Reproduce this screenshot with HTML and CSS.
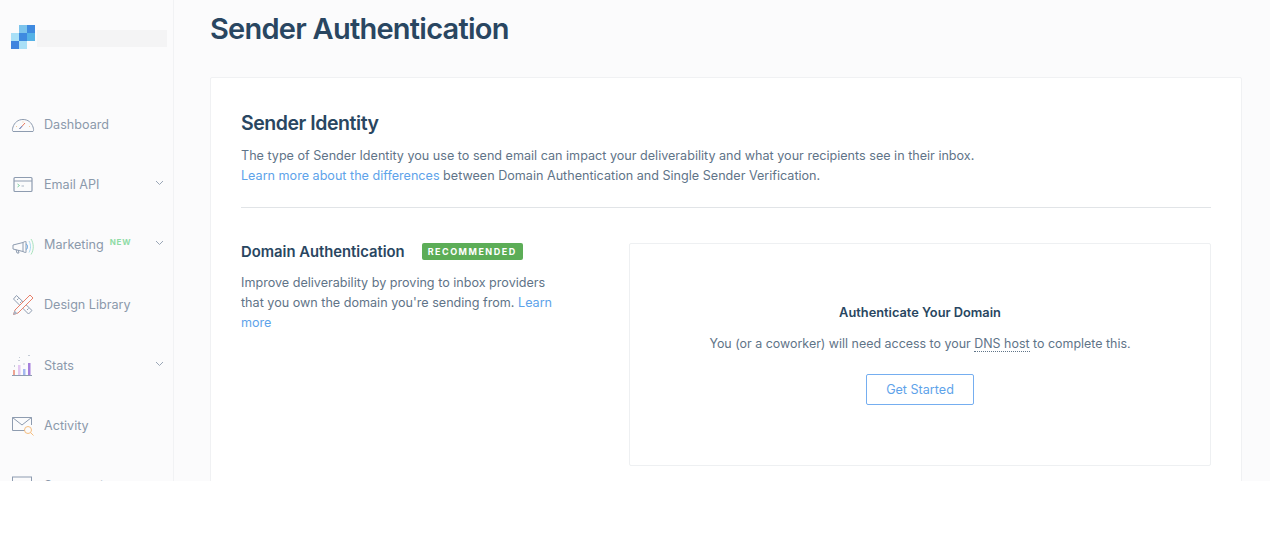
FILE: index.html
```html
<!DOCTYPE html>
<html lang="en">
<head>
  <meta charset="UTF-8">
  <title>Sender Authentication</title>
  <link rel="stylesheet" href="styles.css">
</head>
<body>
  <div class="app">
    <aside class="sidebar">
      <div class="brand">
        <svg class="brand-logo" width="24" height="24" viewBox="0 0 24 24">
          <rect x="8" y="0" width="8" height="8" fill="#7cc4ec"/>
          <rect x="16" y="0" width="8" height="8" fill="#3f8ae0"/>
          <rect x="0" y="8" width="8" height="8" fill="#a9e0f7"/>
          <rect x="8" y="8" width="8" height="8" fill="#3f8ae0"/>
          <rect x="16" y="8" width="8" height="8" fill="#55b2e6"/>
          <rect x="0" y="16" width="8" height="8" fill="#3f84de"/>
          <rect x="8" y="16" width="8" height="8" fill="#a9e0f7"/>
        </svg>
        <div class="brand-name"></div>
      </div>
      <nav class="nav">
        <a class="nav-item">
          <svg class="nav-icon" width="24" height="24" viewBox="0 0 24 24" fill="none">
            <path d="M2 19.500c-1-1-.5-3 0-4.500C3.500 10.500 7 7.500 12 7.500s8.500 3 10 7.500c.5 1.500 1 3.500 0 4.500z" stroke="#8e9cb0" stroke-width="1"/>
            <path d="M8.500 17l5.500-6" stroke="#e8795d" stroke-width="1"/>
            <path d="M8.500 17l2.500-2.800" stroke="#4a8fe0" stroke-width="1"/>
            <path d="M12 9.500v1M5 14.500h1M18 14.500h1" stroke="#f3c99b" stroke-width="1"/>
          </svg>
          <span>Dashboard</span>
        </a>
        <a class="nav-item">
          <svg class="nav-icon" width="24" height="24" viewBox="0 0 24 24" fill="none">
            <rect x="3" y="5.500" width="18" height="14" rx="1" stroke="#8e9cb0" stroke-width="1.200"/>
            <path d="M3 9h18" stroke="#8e9cb0" stroke-width="1"/>
            <path d="M6.500 12l2 1.500-2 1.500" stroke="#7fd0a0" stroke-width="1"/>
            <path d="M10.500 14h2.500" stroke="#a9b5c5" stroke-width="1"/>
          </svg>
          <span>Email API</span>
          <svg class="nav-caret" width="9" height="6" viewBox="0 0 9 6" fill="none"><path d="M1 1l3.500 3.500L8 1" stroke="#9aa6b6" stroke-width="1"/></svg>
        </a>
        <a class="nav-item">
          <svg class="nav-icon" width="24" height="24" viewBox="0 0 24 24" fill="none">
            <path d="M2 12l10-2.500v9L2 16z" stroke="#8e9cb0" stroke-width="1"/>
            <path d="M5 16.500l1 3.500h2l-.8-3" stroke="#8e9cb0" stroke-width="1"/>
            <path d="M12 9.500c1.500-1 2.500-1 3-1v11c-.5 0-1.500 0-3-1" stroke="#8e9cb0" stroke-width="1"/>
            <path d="M15 11c2 .5 2 5 0 5.500" stroke="#5ba3e6" stroke-width="1"/>
            <path d="M18 8c2 3.500 2 8 0 11.500" stroke="#a6d8ee" stroke-width="1"/>
            <path d="M20 6c3 4.500 3 11 0 15.500" stroke="#a9e3bd" stroke-width="1"/>
          </svg>
          <span>Marketing</span>
          <span class="nav-new">NEW</span>
          <svg class="nav-caret" width="9" height="6" viewBox="0 0 9 6" fill="none"><path d="M1 1l3.500 3.500L8 1" stroke="#9aa6b6" stroke-width="1"/></svg>
        </a>
        <a class="nav-item">
          <svg class="nav-icon" width="24" height="24" viewBox="0 0 24 24" fill="none">
            <path d="M5.500 2.500L2.500 6l15 15 3.500-3.500z" stroke="#8e9cb0" stroke-width="1"/>
            <path d="M6 7l1.500-1.500M9 10l1.500-1.500M13 14l1.500-1.500M16 17l1.500-1.500" stroke="#8e9cb0" stroke-width="1"/>
            <path d="M19 2l3 3L7 20l-4.500 1.500L4 17z" fill="#fbfbfc" stroke="#e8806a" stroke-width="1"/>
            <path d="M2 22l1.500-4.500 3 3z" fill="#a9b5c5"/>
          </svg>
          <span>Design Library</span>
        </a>
        <a class="nav-item">
          <svg class="nav-icon" width="24" height="24" viewBox="0 0 24 24" fill="none">
            <path d="M1 22.500h20" stroke="#8e9cb0" stroke-width="1"/>
            <rect x="2" y="17" width="2" height="5" fill="#eea493"/>
            <rect x="7" y="12" width="2.500" height="10" fill="#e3c8f2"/>
            <rect x="12" y="16" width="2.500" height="6" fill="#a5b8f0"/>
            <rect x="17" y="10" width="2.500" height="12" fill="#a57fdc"/>
            <path d="M3 13h1M7.500 7.500h1M12.500 11h1M8 4.500h.500M17.500 2.500h1" stroke="#8e9cb0" stroke-width="1.200"/>
          </svg>
          <span>Stats</span>
          <svg class="nav-caret" width="9" height="6" viewBox="0 0 9 6" fill="none"><path d="M1 1l3.500 3.500L8 1" stroke="#9aa6b6" stroke-width="1"/></svg>
        </a>
        <a class="nav-item">
          <svg class="nav-icon" width="24" height="24" viewBox="0 0 24 24" fill="none">
            <path d="M14 17.500H1.500V4.500h19V12" stroke="#8e9cb0" stroke-width="1"/>
            <path d="M1.500 4.500L11 12l9.500-7.500" stroke="#8e9cb0" stroke-width="1"/>
            <circle cx="17" cy="17" r="3.500" stroke="#f5bd7e" stroke-width="1"/>
            <path d="M19.500 19.500l3 3" stroke="#f5bd7e" stroke-width="1"/>
          </svg>
          <span>Activity</span>
        </a>
        <a class="nav-item">
          <svg class="nav-icon" width="24" height="24" viewBox="0 0 24 24" fill="none">
            <rect x="1.500" y="3" width="19" height="16" stroke="#8e9cb0" stroke-width="1"/>
          </svg>
          <span>Suppressions</span>
        </a>
      </nav>
    </aside>
    <main class="main">
      <h1 class="page-title">Sender Authentication</h1>
      <section class="card">
        <h2 class="card-title">Sender Identity</h2>
        <p class="card-text">The type of Sender Identity you use to send email can impact your deliverability and what your recipients see in their inbox.<br><a class="link">Learn more about the differences</a> between Domain Authentication and Single Sender Verification.</p>
        <hr class="divider">
        <div class="auth-row">
          <div class="auth-info">
            <div class="auth-head">
              <h3 class="auth-title">Domain Authentication</h3>
              <span class="badge">RECOMMENDED</span>
            </div>
            <p class="card-text">Improve deliverability by proving to inbox providers that you own the domain you're sending from. <a class="link">Learn more</a></p>
          </div>
          <div class="auth-box">
            <h4 class="box-title">Authenticate Your Domain</h4>
            <p class="box-text">You (or a coworker) will need access to your <span class="dotted">DNS host</span> to complete this.</p>
            <a class="btn">Get Started</a>
          </div>
        </div>
      </section>
    </main>
  </div>
</body>
</html>
```

FILE: styles.css
```css
body {
  margin: 0;
  background-color: #fff;
  font-family: Inter, "Noto Sans", sans-serif;
  color: #5f7488;
}
.app {
  display: flex;
  height: 481px;
  overflow: hidden;
  background-color: #fbfbfc;
}
.sidebar {
  flex: 0 0 173px;
  border-right: 1px solid #f1f2f4;
}
.brand {
  display: flex;
  align-items: center;
  gap: 2px;
  padding: 25px 0 0 11px;
}
.brand-name {
  width: 130px;
  height: 17px;
  margin-top: 2px;
  background-color: #f4f4f5;
}
.nav {
  padding-top: 45px;
}
.nav-item {
  display: flex;
  align-items: center;
  height: 60.25px;
  padding-left: 11px;
  padding-right: 9px;
  font-size: 12.6px;
  color: #8b99ab;
}
.nav-icon {
  margin-right: 9px;
}
.nav-caret {
  margin-left: auto;
  margin-top: -3px;
}
.nav-new {
  margin-left: 6px;
  margin-top: -5px;
  font-size: 8px;
  font-weight: 700;
  letter-spacing: 0.8px;
  color: #8fdca6;
}
.main {
  flex: 1;
  padding: 0 28px 0 36px;
}
.page-title {
  margin: 11px 0 31px;
  font-size: 29px;
  line-height: 35px;
  font-weight: 600;
  letter-spacing: -0.75px;
  color: #294661;
}
.card {
  background-color: #fff;
  border: 1px solid #f0f1f3;
  border-radius: 2px;
  padding: 32px 30px;
}
.card-title {
  margin: 0 0 10px;
  font-size: 19.5px;
  line-height: 26px;
  font-weight: 600;
  letter-spacing: -0.45px;
  color: #294661;
}
.card-text {
  margin: 0;
  font-size: 12.6px;
  line-height: 20px;
  color: #5f7488;
}
.link {
  color: #5ea3ea;
}
.divider {
  margin: 21px 0 35px;
  border: 0;
  border-top: 1px solid #e1e4e7;
}
.auth-row {
  display: flex;
  justify-content: space-between;
}
.auth-info {
  width: 320px;
}
.auth-head {
  display: flex;
  align-items: center;
  gap: 17px;
  height: 17px;
  margin-bottom: 13px;
}
.auth-title {
  margin: 0;
  font-size: 14.8px;
  font-weight: 600;
  color: #294661;
}
.badge {
  padding: 0 6px;
  height: 17px;
  line-height: 17px;
  border-radius: 2px;
  background-color: #5cad57;
  color: #fff;
  font-size: 9px;
  font-weight: 700;
  letter-spacing: 1.5px;
}
.auth-box {
  box-sizing: border-box;
  width: 582px;
  height: 223px;
  border: 1px solid #eef0f2;
  border-radius: 2px;
  padding-top: 60px;
  text-align: center;
}
.box-title {
  margin: 0 0 12px;
  font-size: 12.8px;
  line-height: 18px;
  font-weight: 600;
  color: #294661;
}
.box-text {
  margin: 0;
  font-size: 12.45px;
  line-height: 20px;
  color: #5f7488;
}
.dotted {
  border-bottom: 1px dotted #5f7488;
}
.btn {
  display: block;
  box-sizing: border-box;
  width: 108px;
  height: 31px;
  margin: 20px auto 0;
  border: 1px solid #75aef0;
  border-radius: 2px;
  font-size: 12.6px;
  line-height: 29px;
  color: #5ea3ea;
}
```
